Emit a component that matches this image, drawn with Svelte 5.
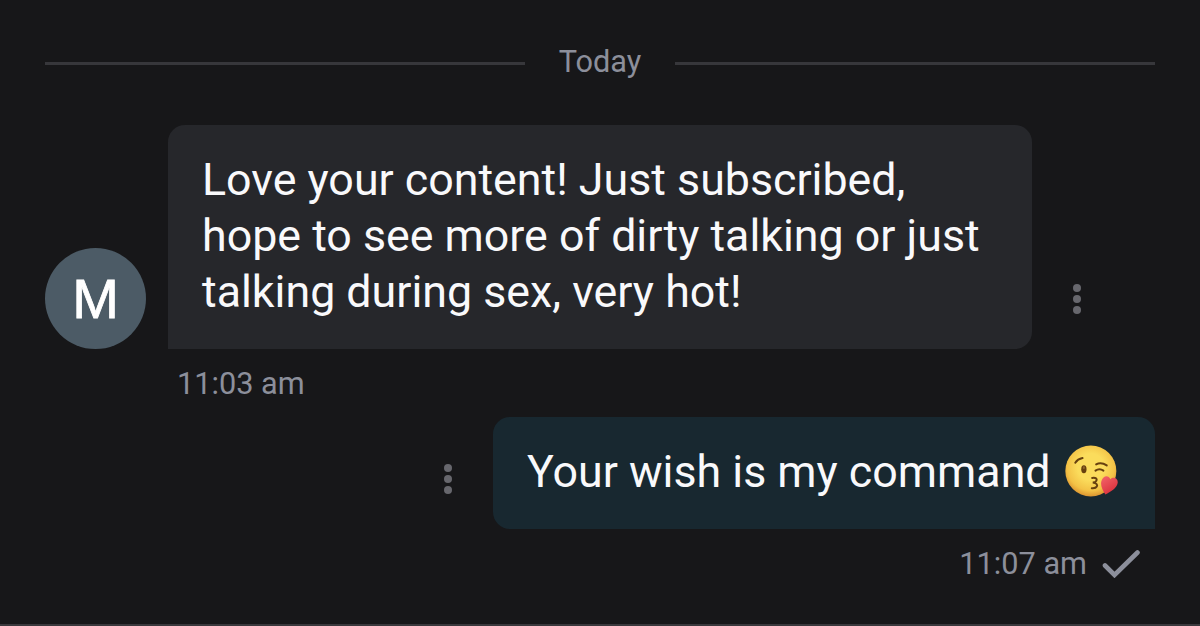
<script>
	const day = 'Today';
	const messages = [
		{
			from: 'M',
			lines: [
				'Love your content! Just subscribed,',
				'hope to see more of dirty talking or just',
				'talking during sex, very hot!'
			],
			time: '11:03 am'
		},
		{ lines: ['Your wish is my command'], kiss: true, time: '11:07 am' }
	];
</script>

<main class="chat">
	<div class="day"><span>{day}</span></div>

	{#each messages as message}
		<article class="message" class:mine={!message.from}>
			<div class="row">
				{#if message.from}
					<div class="avatar">{message.from}</div>
				{/if}
				<div class="bubble">
					{#each message.lines as line}
						<div class="line">
							<span>{line}</span>
							{#if message.kiss}
								<svg class="emoji" viewBox="44 30 160 156" role="img" aria-label="Face blowing a kiss">
									<defs>
										<radialGradient id="face" cx="0.5" cy="0.42" r="0.58">
											<stop offset="0.45" stop-color="#fbdc5c" />
											<stop offset="0.8" stop-color="#f3c246" />
											<stop offset="1" stop-color="#dc9530" />
										</radialGradient>
										<linearGradient id="heart" x1="0" y1="0" x2="0.6" y2="1">
											<stop offset="0" stop-color="#f4666b" />
											<stop offset="1" stop-color="#d92f3b" />
										</linearGradient>
									</defs>
									<circle cx="122" cy="108" r="77" fill="url(#face)" />
									<g fill="none" stroke="#67400f" stroke-width="6" stroke-linecap="round">
										<path d="M75 83Q82 72 97 69" />
										<path d="M138 88Q153 80 170 91" />
										<path d="M136 107Q148 98 160 107" />
										<path d="M126 129Q143 127 139 137Q137 142 128 143Q145 146 140 155Q137 161 125 160" />
									</g>
									<ellipse cx="101" cy="103" rx="8" ry="12" fill="#67400f" />
									<ellipse cx="101" cy="98" rx="3" ry="4" fill="#93692c" />
									<path
										d="M166 179C157 166 150 151 154 138C159 121 176 119 181 133C190 124 205 130 203 144C201 159 181 171 166 179Z"
										fill="url(#heart)"
									/>
								</svg>
							{/if}
						</div>
					{/each}
				</div>
				<svg class="more" viewBox="0 0 8 30" aria-hidden="true">
					<circle cx="4" cy="4" r="4" />
					<circle cx="4" cy="15" r="4" />
					<circle cx="4" cy="26" r="4" />
				</svg>
			</div>
			<div class="time">
				<span>{message.time}</span>
				{#if !message.from}
					<svg class="check" viewBox="0 0 38 28" aria-hidden="true">
						<path d="M3 15.5L12.5 25L35.5 2.5" />
					</svg>
				{/if}
			</div>
		</article>
	{/each}
</main>

<style>
	:global(body) {
		background: #171719;
	}
	.chat {
		box-sizing: border-box;
		height: 626px;
		padding: 35px 45px 0;
		overflow: hidden;
		border-bottom: 2px solid #39383c;
		background: #171719;
		color: #f9f9fb;
		font-family: Roboto, sans-serif;
	}
	.day {
		display: flex;
		align-items: center;
		height: 56px;
		margin-bottom: 34px;
		color: #8c8f9b;
		font-size: 30.7px;
	}
	.day span {
		width: 150px;
		text-align: center;
		line-height: 54px;
		padding-bottom: 2px;
	}
	.day::before,
	.day::after {
		content: '';
		flex: 1;
		height: 3px;
		background: #37373b;
	}
	.row {
		display: flex;
		align-items: flex-end;
	}
	.avatar {
		width: 101px;
		height: 101px;
		margin-right: 22px;
		border-radius: 50%;
		background: #4c5b66;
		color: #fff;
		font-family: 'Liberation Sans', sans-serif;
		font-size: 56px;
		-webkit-text-stroke: 0.8px #fff;
		line-height: 101px;
		text-align: center;
	}
	.bubble {
		box-sizing: border-box;
		width: 864px;
		padding: 27px 34px 29px;
		border-radius: 17px 17px 17px 0;
		background: #26272b;
		font-size: 44.75px;
		line-height: 56px;
		white-space: nowrap;
	}
	.line {
		display: flex;
		align-items: center;
		height: 56px;
	}
	.more {
		width: 8px;
		height: 30px;
		margin: 0 0 35px 41px;
		fill: #67676d;
	}
	.time {
		display: flex;
		align-items: center;
		height: 68px;
		padding-left: 132px;
		color: #8c8f9b;
		font-size: 30.7px;
	}
	.mine .row {
		flex-direction: row-reverse;
	}
	.mine .bubble {
		width: 662px;
		border-radius: 17px 17px 0 17px;
		background: #182830;
	}
	.mine .more {
		margin: 0 41px 35px 0;
	}
	.mine .time {
		justify-content: flex-end;
		padding: 0 15px 0 0;
	}
	.emoji {
		flex: none;
		width: 53px;
		height: 52px;
		margin: 0 0 2px 14px;
	}
	.check {
		width: 38px;
		height: 28px;
		margin: 1px 0 0 15px;
		fill: none;
		stroke: #8c8f9b;
		stroke-width: 4.6;
		stroke-linecap: round;
	}
</style>
